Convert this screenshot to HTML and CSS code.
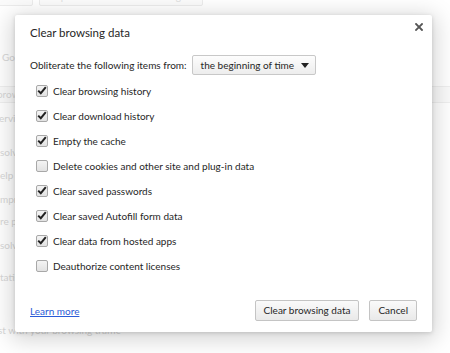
FILE: index.html
```html
<!DOCTYPE html>
<html>
<head>
<meta charset="utf-8">
<link rel="stylesheet" href="styles.css">
</head>
<body>
<div class="page">
  <div class="top-buttons">
    <span class="bg-btn">user</span>
    <span class="bg-btn">Import bookmarks and settings...</span>
  </div>
  <div class="bg-line l-go">Google Chrome</div>
  <div class="bg-band"><span class="bg-band-text">browsing data...</span></div>
  <div class="bg-line l-servi">ervices to improve your browsing experience</div>
  <div class="bg-line l-solv1">solve navigation errors</div>
  <div class="bg-line l-elp">elp complete searches</div>
  <div class="bg-line l-mpr">mprove page load performance</div>
  <div class="bg-line l-rep">re protection</div>
  <div class="bg-line l-solv2">solve spelling errors</div>
  <div class="bg-line l-tatis">tatistics and crash reports</div>
  <div class="bg-line l-st">st with your browsing traffic</div>
</div>

<div class="overlay">
  <div class="dialog">
    <div class="dialog-head">
      <h1 class="title">Clear browsing data</h1>
      <span class="close">
        <svg width="8" height="8" viewBox="0 0 8 8"><path d="M1 1 L7 7 M7 1 L1 7" stroke="#555" stroke-width="1.8" stroke-linecap="square"/></svg>
      </span>
    </div>
    <div class="from-row">
      <span class="from-label">Obliterate the following items from:</span>
      <span class="select">the beginning of time<svg class="arrow" width="8" height="5" viewBox="0 0 8 5"><path d="M0 0 H8 L4 5 Z" fill="#222"/></svg></span>
    </div>
    <ul class="checks">
      <li class="check-row"><span class="box on"><svg width="10" height="9" viewBox="0 0 10 9"><path d="M1.2 4.6 L3.8 7.2 L8.8 1.2" fill="none" stroke="#222" stroke-width="2"/></svg></span>Clear browsing history</li>
      <li class="check-row"><span class="box on"><svg width="10" height="9" viewBox="0 0 10 9"><path d="M1.2 4.6 L3.8 7.2 L8.8 1.2" fill="none" stroke="#222" stroke-width="2"/></svg></span>Clear download history</li>
      <li class="check-row"><span class="box on"><svg width="10" height="9" viewBox="0 0 10 9"><path d="M1.2 4.6 L3.8 7.2 L8.8 1.2" fill="none" stroke="#222" stroke-width="2"/></svg></span>Empty the cache</li>
      <li class="check-row"><span class="box"></span>Delete cookies and other site and plug-in data</li>
      <li class="check-row"><span class="box on"><svg width="10" height="9" viewBox="0 0 10 9"><path d="M1.2 4.6 L3.8 7.2 L8.8 1.2" fill="none" stroke="#222" stroke-width="2"/></svg></span>Clear saved passwords</li>
      <li class="check-row"><span class="box on"><svg width="10" height="9" viewBox="0 0 10 9"><path d="M1.2 4.6 L3.8 7.2 L8.8 1.2" fill="none" stroke="#222" stroke-width="2"/></svg></span>Clear saved Autofill form data</li>
      <li class="check-row"><span class="box on"><svg width="10" height="9" viewBox="0 0 10 9"><path d="M1.2 4.6 L3.8 7.2 L8.8 1.2" fill="none" stroke="#222" stroke-width="2"/></svg></span>Clear data from hosted apps</li>
      <li class="check-row"><span class="box"></span>Deauthorize content licenses</li>
    </ul>
    <div class="footer">
      <a class="learn" href="#">Learn more</a>
      <div class="actions">
        <span class="btn">Clear browsing data</span>
        <span class="btn">Cancel</span>
      </div>
    </div>
  </div>
</div>
</body>
</html>
```

FILE: styles.css
```css
* { box-sizing: border-box; }
html, body { margin: 0; padding: 0; }
body {
  width: 450px;
  height: 353px;
  overflow: hidden;
  background: #fff;
  font-family: Lato, "Noto Sans", sans-serif;
  font-size: 10px;
  position: relative;
}
.page {
  color: #c6c6c6;
  font-size: 10px;
  display: flex;
  flex-direction: column;
}
.top-buttons {
  display: flex;
  gap: 6px;
  margin-top: -14px;
  margin-left: -8px;
}
.bg-btn {
  border: 1px solid #e4e4e4;
  border-radius: 2px;
  background: #fafafa;
  padding: 0 10px;
  height: 20px;
  line-height: 18px;
  color: #cfcfcf;
  white-space: nowrap;
}
.bg-line { height: 16px; line-height: 16px; white-space: nowrap; }
.l-go { margin-top: 43px; margin-left: 2px; }
.bg-band {
  margin-top: 21px;
  height: 17px;
  border-top: 1px solid #e8e8e8;
  border-bottom: 1px solid #e8e8e8;
  background: #f8f8f8;
  line-height: 15px;
  white-space: nowrap;
}
.bg-band-text { margin-left: -3px; }
.l-servi { margin-top: 7px; margin-left: -1px; }
.l-solv1 { margin-top: 18px; }
.l-elp { margin-top: 7px; }
.l-mpr { margin-top: 8px; }
.l-rep { margin-top: 6px; }
.l-solv2 { margin-top: 8px; }
.l-tatis { margin-top: 16px; }
.l-st { margin-top: 37px; margin-left: -2px; }

.overlay {
  position: absolute;
  inset: 0;
  background: rgba(255,255,255,0.3);
}
.dialog {
  position: absolute;
  left: 15px;
  top: 15px;
  width: 417px;
  height: 317px;
  background: #fff;
  border-radius: 2px;
  box-shadow: 0 4px 22px 4px rgba(0,0,0,0.17), 0 1px 4px rgba(0,0,0,0.15);
  padding: 0 15px;
  display: flex;
  flex-direction: column;
  color: #262626;
}
.dialog-head {
  display: flex;
  justify-content: space-between;
  align-items: flex-start;
  height: 36px;
  padding-top: 11px;
}
.title {
  margin: 0;
  font-weight: normal;
  font-size: 11.5px;
  line-height: 14px;
  color: #262626;
}
.close {
  margin-top: -3px;
  margin-right: -6px;
  width: 8px;
  height: 8px;
  display: flex;
}
.from-row {
  display: flex;
  align-items: center;
  gap: 5px;
  margin-top: 4px;
  height: 20px;
}
.select {
  display: flex;
  align-items: center;
  height: 20px;
  padding: 0 6px 0 8px;
  border: 1px solid #c8c8c8;
  border-radius: 2px;
  background: linear-gradient(#fdfdfd, #ededed);
  color: #262626;
  gap: 7px;
}
.checks {
  list-style: none;
  margin: 3px 0 0 0;
  padding: 0;
  display: flex;
  flex-direction: column;
}
.check-row {
  display: flex;
  align-items: center;
  height: 25px;
  padding-left: 6px;
  gap: 5px;
}
.box {
  width: 12px;
  height: 12px;
  border: 1px solid #a8a8a8;
  border-radius: 2px;
  background: linear-gradient(#f4f4f4, #e2e2e2);
  display: flex;
  align-items: center;
  justify-content: center;
}
.box svg { margin-top: -1px; }
.footer {
  margin-top: auto;
  margin-bottom: 11px;
  display: flex;
  justify-content: space-between;
  align-items: center;
}
.learn {
  color: #2a5bd7;
  text-decoration: underline;
}
.actions { display: flex; gap: 10px; }
.btn {
  height: 21px;
  line-height: 19px;
  padding: 0 8px;
  border: 1px solid #c4c4c4;
  border-radius: 2px;
  background: linear-gradient(#fafafa, #e9e9e9);
  color: #262626;
}
```
